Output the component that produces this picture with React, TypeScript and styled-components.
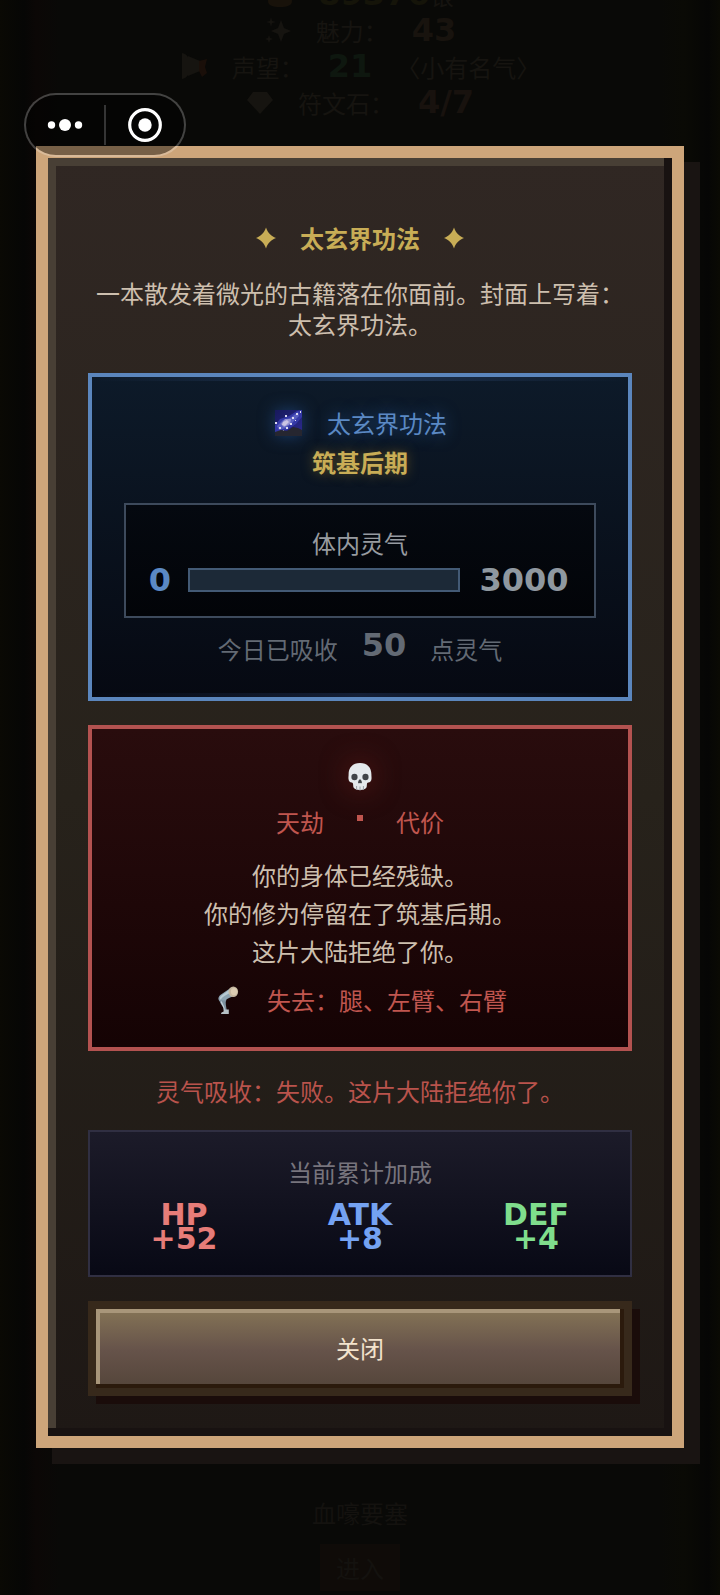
import React from "react";
import styled, { createGlobalStyle, css } from "styled-components";

const LINE = 31;

const GlobalStyle = createGlobalStyle`
  *, *::before, *::after { box-sizing: border-box; }
  html, body { margin: 0; background: #090806; }
  body {
    font-family: "Noto Sans CJK SC", "Noto Sans", sans-serif;
    font-size: 24px;
    line-height: ${LINE}px;
    color: #cdbfae;
  }
  h1, h2, p, dl, dt, dd { margin: 0; font-size: inherit; font-weight: inherit; }
  button { font: inherit; color: inherit; cursor: pointer; }
`;

const Page = styled.div`
  position: relative;
  min-height: 100vh;
  overflow: hidden;
  background: linear-gradient(90deg, #0a0904 0, #060605 24px, #0b0706 36px, #090907 60px, #090907 calc(100% - 60px), #0a0a05 calc(100% - 36px), #060605 calc(100% - 12px), #0a0a04 100%);
`;

/* The game screen that stays dimly visible under the dialog */
const Underlay = styled.div`
  position: absolute;
  inset: 0;
  display: flex;
  flex-direction: column;
  justify-content: space-between;
  align-items: center;
  color: #161410;
`;

const HeroStats = styled.div`
  margin-top: -24px;
  display: flex;
  flex-direction: column;
  align-items: center;
`;

const HeroStat = styled.div`
  display: flex;
  align-items: center;
  gap: 24px;
  height: 36px;
`;

const Digits = styled.span<{ $tone?: string }>`
  font-family: "DejaVu Sans", sans-serif;
  font-weight: 700;
  font-size: 32px;
  line-height: 24px;
  ${(p) => p.$tone && css`color: ${p.$tone};`}
`;

const Location = styled.div`
  display: flex;
  flex-direction: column;
  align-items: center;
  gap: 16px;
  padding-bottom: 4px;
  color: #14120f;
`;

const EnterButton = styled.button`
  padding: 8px 16px;
  border: 0;
  background: #0f0b08;
`;

const Stage = styled.main`
  position: relative;
  padding: 146px 36px;
`;

const Dialog = styled.section`
  display: flex;
  flex-direction: column;
  gap: 24px;
  padding: 64px 40px 40px;
  border: 12px solid #cda57a;
  background: linear-gradient(#302723, #27221b 50%, #1e1815);
  box-shadow: inset -8px -8px 0 #181211, inset 8px 8px 0 #483f35, 16px 16px 0 #191412;
  text-align: center;
`;

const Title = styled.h1`
  display: flex;
  justify-content: center;
  align-items: center;
  gap: 22px;
  color: #c8ad56;

  strong { font-weight: 700; }
  svg { display: block; }
`;

const Intro = styled.p`
  margin-bottom: 10px;
`;

const Card = styled.section<{ $kind: "qi" | "doom" }>`
  border: 4px solid;
  ${(p) =>
    p.$kind === "qi"
      ? css`
          padding: 30px 32px 33px;
          border-color: #5b86bd;
          background:
            linear-gradient(90deg, transparent, #1f3350, transparent) top / 100% 4px no-repeat,
            linear-gradient(90deg, transparent, #141f36, transparent) bottom / 100% 4px no-repeat,
            linear-gradient(#0d1a29, #060912);
        `
      : css`
          padding: 32px;
          border-color: #b35250;
          background: linear-gradient(#290c0d, #150304);
        `}
`;

const IconLine = styled.div<{ $tone: string; $glow?: boolean }>`
  display: flex;
  justify-content: center;
  align-items: center;
  gap: 24px;
  color: ${(p) => p.$tone};
  ${(p) => p.$glow && css`text-shadow: 0 0 16px #24508a;`}

  svg {
    display: block;
    ${(p) => p.$glow && css`filter: drop-shadow(0 0 8px #1b3c6a);`}
  }
`;

const Realm = styled.p`
  margin: 8px 0 26px;
  font-weight: 700;
  color: #c8ad56;
  text-shadow: 0 0 12px #5c4e24;
`;

const QiBox = styled.div`
  padding: 22px 22px 24px;
  border: 2px solid #3d4a5c;
  background: linear-gradient(#050910, #020408);
  color: #979ba0;
`;

const QiLabel = styled.label`
  display: block;
  margin-bottom: 10px;
`;

const QiRow = styled.div`
  display: flex;
  align-items: center;
  gap: 16px;
`;

const QiEnd = styled.div<{ $cells: number }>`
  display: flex;
  justify-content: center;
  width: ${(p) => p.$cells * 24}px;
`;

const QiBar = styled.progress`
  appearance: none;
  flex: 1;
  min-width: 0;
  height: 24px;
  border: 2px solid #435a75;
  background: #1c2937;

  &::-webkit-progress-bar { background: #1c2937; }
  &::-webkit-progress-value { background: #5b86bd; }
`;

const Absorbed = styled.p`
  display: flex;
  justify-content: center;
  align-items: flex-start;
  gap: 24px;
  margin-top: 15px;
  color: #636a74;
`;

const SkullMark = styled.div`
  display: flex;
  justify-content: center;
  height: ${LINE}px;
  margin-bottom: 14px;

  svg { filter: drop-shadow(0 0 14px #5a1815); }
`;

const DoomTitle = styled.h2`
  display: flex;
  justify-content: center;
  align-items: center;
  gap: 24px;
  color: #c0564f;
`;

const DotCell = styled.span`
  display: flex;
  justify-content: center;
  width: 24px;
  padding-bottom: 8px;

  &::before {
    content: "";
    width: 6px;
    height: 6px;
    background: currentColor;
  }
`;

const Fate = styled.p`
  margin: 19px 0 14px;
  line-height: 38px;
`;

const Verdict = styled.p`
  color: #b9534c;
`;

const Bonus = styled.section`
  padding: 24px;
  border: 2px solid #302f42;
  background: linear-gradient(#1c1b29, #080915);
`;

const BonusTitle = styled.h2`
  margin-bottom: 16px;
  color: #77747d;
`;

const BonusGrid = styled.dl`
  display: grid;
  grid-template-columns: repeat(3, 1fr);
  column-gap: 36px;
`;

const BonusItem = styled.div<{ $tone: string }>`
  display: flex;
  flex-direction: column;
  align-items: center;
  font: 700 30px/24px "DejaVu Sans", sans-serif;
  color: ${(p) => p.$tone};
`;

const CloseButton = styled.button`
  padding: 23px 24px 25px;
  border: 8px solid #37291b;
  background: linear-gradient(#857456, #66534a 52%, #54453a) padding-box;
  box-shadow: inset -4px -4px 0 #2b1a0c, inset 4px 4px 0 #a8967a, 8px 8px 0 #1a0c0a;
  color: #f3e3cd;
`;

const Capsule = styled.nav`
  position: absolute;
  top: 93px;
  left: 24px;
  display: flex;
  align-items: center;
  width: 162px;
  height: 64px;
  border: 2px solid rgba(255, 255, 255, 0.24);
  border-radius: 32px;
  background: rgba(0, 0, 0, 0.42);
  background-clip: padding-box;
`;

const CapsuleButton = styled.button`
  flex: 1;
  display: flex;
  justify-content: center;
  align-items: center;
  height: 40px;
  padding: 0;
  border: 0;
  background: none;
  color: #fff;

  & + & { border-left: 2px solid #353535; }
`;

function Star() {
  return (
    <svg width="24" height="24" viewBox="0 0 24 24" aria-hidden="true">
      <path d="M12 1.500C13.900 7 17 10.100 22 12 17 13.900 13.900 17 12 22.500 10.100 17 7 13.900 2 12 7 10.100 10.100 7 12 1.500Z" fill="currentColor" />
    </svg>
  );
}

function MilkyWay() {
  return (
    <svg width="30" height="30" viewBox="0 0 30 30" aria-hidden="true">
      <defs>
        <linearGradient id="sky" x1="0" y1="0" x2="1" y2="1">
          <stop offset="0" stopColor="#17195c" />
          <stop offset="1" stopColor="#2c2a8f" />
        </linearGradient>
      </defs>
      <path d="M2 2h27v26H2z" fill="url(#sky)" />
      <path d="M2 17L7 11 16 8 24 3 29 2V9L23 16 14 22 5 25 2 24Z" fill="#3438a6" />
      <path d="M4 18L10 12 17 10 25 4 26 8 19 15 13 20 6 22Z" fill="#595ec0" />
      <path d="M8 16L12 11 18 11 17 16 11 19Z" fill="#9491d2" />
      <path d="M10 14l4-2 2 2-4 4-3-1z" fill="#cbc4e4" />
      <path d="M12 7h2v2h-2zM2 14h2v2H2zM6 19h2v2H6zM19 9h2v2h-2zM23 5h2v2h-2zM17 15h2v2h-2zM13 19h2v2h-2zM27 3h1v2h-1zM22 12h1v1h-1zM10 22h1v1h-1z" fill="#dcdaf0" />
      <path d="M2 24L8 22 14 23 20 19 25 20 29 22V28H2Z" fill="#262630" />
    </svg>
  );
}

function Skull() {
  return (
    <svg width="30" height="30" viewBox="0 0 30 30" aria-hidden="true">
      <path d="M15 2C7.600 2 3.600 6.800 3.600 13.200c0 2-.3 3.300-.1 4.800.3 2.400 1.300 3.200 3.200 3.600 1 .2 1.300.7 1.400 1.900l.2 2.300c.2 2 2.600 3.200 6.700 3.200s6.500-1.200 6.700-3.200l.2-2.300c.1-1.200.4-1.700 1.400-1.900 1.900-.4 2.900-1.200 3.200-3.600.2-1.500-.1-2.800-.1-4.800C26.400 6.800 22.400 2 15 2Z" fill="#e4e9ec" />
      <ellipse cx="9.500" cy="16" rx="3.100" ry="3.300" fill="#3f4347" />
      <ellipse cx="20.500" cy="16" rx="3.100" ry="3.300" fill="#3f4347" />
      <path d="M15 18.300c1 0 2 2.400 1.900 3.500-.1.900-1.500.6-1.900 0-.4.600-1.800.9-1.900 0-.1-1.100.9-3.500 1.900-3.500Z" fill="#3f4347" />
      <path d="M11.600 25v4M15 25.500v4M18.400 25v4" stroke="#9aa2a7" strokeWidth="1" />
    </svg>
  );
}

function MechanicalLeg() {
  return (
    <svg width="30" height="30" viewBox="0 0 30 30" aria-hidden="true">
      <path d="M17.500 3L8 9.500C5 11.700 4.600 14.500 7 16.500l6-.6c.3-1.700 1.400-2.300 3.500-3.200l6-2.300Z" fill="#8ea4b2" />
      <path d="M16 5L8.500 10.500c-2 1.600-2 3-1 4.300 2-3.500 6-5 11-7.300Z" fill="#b9cad3" />
      <path d="M6.600 15.500l6.500-.2c-1 3 .2 6.300.6 9.600h-2.900C10.500 21 7 19.500 6.600 15.500Z" fill="#7c919f" />
      <path d="M8.200 16.500c.8 3 2.800 4.500 3.200 8.200" stroke="#c3d1d8" strokeWidth="1.200" fill="none" />
      <path d="M10.600 24.500h5.200v4.400H8c0-1.600 1.500-2 2.600-2.500Z" fill="#b6c0c5" />
      <ellipse cx="20.300" cy="6.800" rx="4.800" ry="5.200" fill="#c5b7a0" />
      <ellipse cx="21" cy="6.600" rx="3.200" ry="3.700" fill="#dcccb2" />
    </svg>
  );
}

function Sparkles() {
  return (
    <svg width="28" height="28" viewBox="0 0 28 28" fill="currentColor" aria-hidden="true">
      <path d="M17 4l3 8 7 3-7 3-3 8-3-8-7-3 7-3zM7 1l1 4 4 1-4 1-1 4-1-4-4-1 4-1zM5 19l1 3 3 1-3 1-1 3-1-3-3-1 3-1z" />
    </svg>
  );
}

function Horn() {
  return (
    <svg width="28" height="28" viewBox="0 0 28 28" fill="currentColor" aria-hidden="true">
      <path d="M2 1c5 1 8 5 8 13s-3 12-8 13z" />
      <path d="M8 4l12 5v10L8 24z" />
      <path d="M19 9l8-2-2 8 2 6-5 4-3-6z" fill="#1a0f09" />
    </svg>
  );
}

function Gem() {
  return (
    <svg width="28" height="28" viewBox="0 0 28 28" fill="currentColor" aria-hidden="true">
      <path d="M7 4h14l6 8-13 14L1 12z" />
    </svg>
  );
}

function MoneyBag() {
  return (
    <svg width="28" height="28" viewBox="0 0 28 28" fill="#18120a" aria-hidden="true">
      <path d="M9 2h10l-2 6c6 3 9 8 9 13 0 4-4 6-12 6S2 25 2 21C2 16 5 11 11 8z" />
    </svg>
  );
}

const bonuses = [
  { name: "HP", value: "+52", tone: "#e67c78" },
  { name: "ATK", value: "+8", tone: "#74a2f2" },
  { name: "DEF", value: "+4", tone: "#7fdd8c" },
];

export default function App() {
  return (
    <Page>
      <GlobalStyle />
      <Underlay>
        <HeroStats>
          <HeroStat>
            <MoneyBag />
            <span>
              <Digits $tone="#151409">89376</Digits>银
            </span>
          </HeroStat>
          <HeroStat>
            <Sparkles />
            <span>魅力：</span>
            <Digits $tone="#18130e">43</Digits>
          </HeroStat>
          <HeroStat>
            <Horn />
            <span>声望：</span>
            <Digits $tone="#0e170f">21</Digits>
            <span>〈小有名气〉</span>
          </HeroStat>
          <HeroStat>
            <Gem />
            <span>符文石：</span>
            <Digits $tone="#18120e">4/7</Digits>
          </HeroStat>
        </HeroStats>
        <Location>
          <span>血嚎要塞</span>
          <EnterButton type="button">进入</EnterButton>
        </Location>
      </Underlay>

      <Stage>
        <Dialog role="dialog" aria-labelledby="manual-title">
          <Title id="manual-title">
            <Star />
            <strong>太玄界功法</strong>
            <Star />
          </Title>
          <Intro>一本散发着微光的古籍落在你面前。封面上写着：太玄界功法。</Intro>

          <Card $kind="qi">
            <IconLine $tone="#5b89c4" $glow>
              <MilkyWay />
              <span>太玄界功法</span>
            </IconLine>
            <Realm>筑基后期</Realm>
            <QiBox>
              <QiLabel htmlFor="qi">体内灵气</QiLabel>
              <QiRow>
                <QiEnd $cells={1}>
                  <Digits $tone="#5b89c4">0</Digits>
                </QiEnd>
                <QiBar id="qi" value={0} max={3000} />
                <QiEnd $cells={4}>
                  <Digits $tone="#8f98a0">3000</Digits>
                </QiEnd>
              </QiRow>
            </QiBox>
            <Absorbed>
              <span>今日已吸收</span>
              <Digits>50</Digits>
              <span>点灵气</span>
            </Absorbed>
          </Card>

          <Card $kind="doom">
            <SkullMark>
              <Skull />
            </SkullMark>
            <DoomTitle>
              <span>天劫</span>
              <DotCell />
              <span>代价</span>
            </DoomTitle>
            <Fate>
              你的身体已经残缺。
              <br />
              你的修为停留在了筑基后期。
              <br />
              这片大陆拒绝了你。
            </Fate>
            <IconLine $tone="#c0564f">
              <MechanicalLeg />
              <span>失去：腿、左臂、右臂</span>
            </IconLine>
          </Card>

          <Verdict>灵气吸收：失败。这片大陆拒绝你了。</Verdict>

          <Bonus>
            <BonusTitle>当前累计加成</BonusTitle>
            <BonusGrid>
              {bonuses.map((b) => (
                <BonusItem key={b.name} $tone={b.tone}>
                  <dt>{b.name}</dt>
                  <dd>{b.value}</dd>
                </BonusItem>
              ))}
            </BonusGrid>
          </Bonus>

          <CloseButton type="button">关闭</CloseButton>
        </Dialog>
      </Stage>

      <Capsule aria-label="小程序菜单">
        <CapsuleButton type="button" aria-label="更多">
          <svg width="36" height="14" viewBox="0 0 36 14" fill="currentColor">
            <circle cx="4.500" cy="7" r="3.700" />
            <circle cx="18" cy="7" r="6" />
            <circle cx="31.500" cy="7" r="3.700" />
          </svg>
        </CapsuleButton>
        <CapsuleButton type="button" aria-label="关闭小程序">
          <svg width="34" height="34" viewBox="0 0 34 34">
            <circle cx="17" cy="17" r="15.300" fill="none" stroke="currentColor" strokeWidth="3.200" />
            <circle cx="17" cy="17" r="6.700" fill="currentColor" />
          </svg>
        </CapsuleButton>
      </Capsule>
    </Page>
  );
}
